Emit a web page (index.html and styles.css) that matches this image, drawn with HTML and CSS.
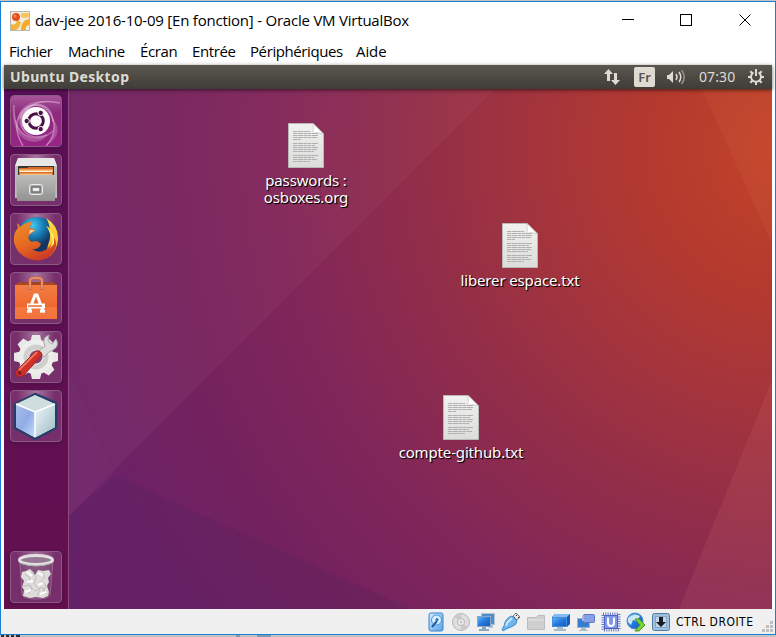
FILE: index.html
```html
<!DOCTYPE html>
<html lang="fr">
<head>
<meta charset="utf-8">
<title>dav-jee 2016-10-09 [En fonction] - Oracle VM VirtualBox</title>
<link rel="stylesheet" href="styles.css">
</head>
<body>
<svg class="defs" aria-hidden="true">
  <defs>
    <linearGradient id="paper" x2="0" y2="1"><stop stop-color="#f1f1f0"/><stop offset="1" stop-color="#dcdcdb"/></linearGradient>
    <linearGradient id="steel" x2="0" y2="1"><stop stop-color="#bdbdbb"/><stop offset="1" stop-color="#929290"/></linearGradient>
    <linearGradient id="orange" x2="0" y2="1"><stop stop-color="#f27d45"/><stop offset=".65" stop-color="#ee682d"/><stop offset=".66" stop-color="#f57842"/><stop offset="1" stop-color="#f27339"/></linearGradient>
    <radialGradient id="globe" cx=".4" cy=".2"><stop stop-color="#45c8ef"/><stop offset=".5" stop-color="#187fb9"/><stop offset="1" stop-color="#153461"/></radialGradient>
    <linearGradient id="fox" x1=".2" x2=".7" y2="1"><stop stop-color="#eb8b29"/><stop offset=".5" stop-color="#e66a20"/><stop offset="1" stop-color="#cb3626"/></linearGradient>
    <linearGradient id="flame" x2="0" y2="1"><stop stop-color="#ffdf45"/><stop offset=".6" stop-color="#fac229"/><stop offset="1" stop-color="#e96820"/></linearGradient>
    <linearGradient id="blue" x2="1" y2="1"><stop stop-color="#64b6f4"/><stop offset=".5" stop-color="#2679dd"/><stop offset="1" stop-color="#1557bc"/></linearGradient>
    <linearGradient id="pale" x2="1" y2="1"><stop stop-color="#d6edff"/><stop offset="1" stop-color="#57a2e5"/></linearGradient>
    <linearGradient id="cubeL" x2="1" y2="1"><stop stop-color="#a8bfe8"/><stop offset=".5" stop-color="#91ace6"/><stop offset="1" stop-color="#c4dcff"/></linearGradient>
    <linearGradient id="cubeR" x2="1" y2="1"><stop stop-color="#edf7fa"/><stop offset="1" stop-color="#9fbbc4"/></linearGradient>
    <linearGradient id="dashbg" x2="0" y2="1"><stop stop-color="#a8579b"/><stop offset=".35" stop-color="#8c2a7c"/><stop offset="1" stop-color="#982486"/></linearGradient>
    <symbol id="doc" viewBox="0 0 36 45">
      <path d="M.5.5H25L35.5 11V44.5H.5Z" fill="url(#paper)" stroke="#bcb7b7"/>
      <path d="M25 .5Q26 7 24.5 10.5Q29 8.500 35.500 11Z" fill="#fff" stroke="#c4c4c4" stroke-width=".7"/>
      <g stroke="#b0b0b0" stroke-dasharray="4 .5 6 .4 3 .5"><path d="M5 8.500H22M5 10.500H30M5 12.500H30M5 14.500H29M5 16.500H13M5 20.500H30M5 22.500H27M5 24.500H30M5 26.500H29M5 28.500H26M5 32.500H30M5 34.500H26M5 36.500H29M5 38.500H22"/></g>
    </symbol>
  </defs>
</svg>
<div class="window">
  <header class="titlebar">
    <svg class="app-icon" width="20" height="20" viewBox="0 0 20 20"><rect x=".5" y=".5" width="19" height="19" fill="#f1eee5" stroke="#bbb6ad"/><path d="M1 13Q6 15 7 9L11 11Q10 18 5 19H1Z" fill="#f3b43a"/><path d="M11 19Q11 9 19 8V14Q15 15 16 19Z" fill="#f7a927"/><path d="M11 2H19V6Q13 8 11 6Z" fill="#fbc55a"/><circle cx="6" cy="6" r="4" fill="#e84e1b"/><circle cx="5" cy="5" r="1.500" fill="#f58b62"/></svg>
    <span class="title">dav-jee 2016-10-09 [En fonction] - Oracle VM VirtualBox</span>
    <svg class="controls" width="130" height="14" viewBox="0 0 130 14" fill="none" stroke="#000" shape-rendering="crispEdges"><path d="M0 6.500H12M58.500 1.500H69.500V12.500H58.500Z"/><path shape-rendering="auto" d="M117.500 1.500L128.500 12.500M128.500 1.500L117.500 12.500"/></svg>
  </header>
  <nav class="menubar"><span class="m1">Fichier</span><span class="m2">Machine</span><span class="m3">Écran</span><span class="m4">Entrée</span><span class="m5">Périphériques</span><span class="m6">Aide</span></nav>
  <main class="screen">
    <div class="panel">
      <span class="panel-title">Ubuntu Desktop</span>
      <svg class="net" width="18" height="18" viewBox="0 0 18 18" fill="#dfdbd2"><path d="M5.500 1L10 6H7V13H4V6H1ZM12.500 17L8 12H11V5H14V12H17Z"/></svg>
      <span class="lang">Fr</span>
      <svg class="sound" width="20" height="18" viewBox="0 0 20 18"><path d="M1 7H3L7 3V15L3 11H1Z" fill="#dfdbd2"/><path d="M10 6Q12 9 10 12M13 4Q16.500 9 13 14" fill="none" stroke="#dfdbd2" stroke-width="1.500"/><path d="M15.500 2Q21 9 15.500 16" fill="none" stroke="#96938a" stroke-width="1.500"/></svg>
      <span class="clock">07:30</span>
      <svg class="power" width="18" height="18" viewBox="0 0 18 18" fill="none" stroke="#dfdbd2" stroke-width="2"><path d="M6.500 4.500A5 5 0 1 0 11.500 4.500M9 1V8M1 9H4M14 9H17M9 14V17M3.300 3.300L5.300 5.300M14.700 3.300L12.700 5.300M3.300 14.700L5.300 12.700M14.700 14.700L12.700 12.700"/></svg>
    </div>
    <div class="workspace">
      <aside class="launcher">
        <div class="tile dash"><svg viewBox="0 0 52 52"><path d="M0 0H52V52H0Z" fill="url(#dashbg)"/><g fill="none" stroke="#e3b6dc"><path d="M13 51Q3 34 9 21Q16 8 31 10Q42 13 43 27" opacity=".55" stroke-width="1.500"/><path d="M50 8Q29 3 17 14Q6 27 16 38Q25 45 37 40" opacity=".55" stroke-width="1.500"/><path d="M36 51Q47 39 43 24Q37 10 24 10Q13 13 10 24" opacity=".5" stroke-width="1.500"/><path d="M4 10Q3 32 15 40Q29 48 43 36" opacity=".45" stroke-width="1.500"/></g><path d="M50 8Q29 3 17 14Q6 27 16 38Q6 30 9 19Q17 1 50 8ZM36 51Q47 39 43 24Q55 39 36 51ZM4 10Q3 32 15 40Q25 47 37 41Q27 51 14 44Q0 34 4 10Z" fill="#fff" opacity=".2"/><circle cx="26" cy="26" r="14" fill="#fff"/><circle cx="26" cy="26" r="7.300" fill="none" stroke="#4c1144" stroke-width="3"/><g stroke="#fff" stroke-width="1"><circle cx="16.700" cy="26" r="2.700" fill="#4c1144"/><circle cx="30.700" cy="17.900" r="2.700" fill="#4c1144"/><circle cx="30.700" cy="34.100" r="2.700" fill="#4c1144"/></g></svg></div>
        <div class="tile"><svg viewBox="0 0 52 52"><path d="M5 12L8 4H44L47 12V44H5Z" fill="#bcbcbb"/><path d="M5 12L8 4H44L47 12Z" fill="#e7e7e5"/><path d="M8 12H44V23H8Z" fill="#353432"/><path d="M9 14H17L19 13H43V22H9Z" fill="#d76b29"/><path d="M9 16.500H43M10 20.500H42" stroke="#f8bf79" stroke-width="2"/><path d="M10 17.500H42" stroke="#fff3d9"/><path d="M6 21H46L45 47H7Z" fill="url(#steel)"/><rect x="19.500" y="30.500" width="13" height="10" rx="2" fill="#aaa" stroke="#ededec"/><path d="M22 33H30V38H22Z" fill="#eee" stroke="#706f6e" stroke-width="1.300"/></svg></div>
        <div class="tile"><svg viewBox="0 0 52 52"><circle cx="27" cy="25" r="21" fill="url(#globe)"/><path d="M36 5Q49 13 48 27Q46 45 29 47Q37 39 38 32Q43 21 36 13Q40 14 40 17Q39 9 36 5Z" fill="url(#flame)"/><path d="M7 10Q9 11 10 14Q14 10 20 9L22 8Q21 13 19 15Q24 15 25 18L19 22Q17 27 22 29Q27 26 31 31Q29 37 22 36Q30 42 38 35Q43 30 44 24Q49 33 42 41Q34 49 23 47Q7 43 4 29Q3 20 8 15Z" fill="url(#fox)"/><path d="M38 16Q46 27 39 36L44 31Q45 20 38 16Z" fill="#fff06b"/><path d="M20 17H25L19 21Z" fill="#fbd4a4"/></svg></div>
        <div class="tile"><svg viewBox="0 0 52 52"><path d="M5 13L9 10H43L47 13Z" fill="#a64525"/><path d="M5 13H47V47H5Z" fill="url(#orange)"/><path d="M20 18V9Q20 6 23 6H29Q32 6 32 9V18" fill="none" stroke="#bf6543" stroke-width="3"/><path d="M20 17V9Q20 6 23 6H29Q32 6 32 9V17" fill="none" stroke="#e98c68" stroke-width="2"/><path d="M19 39L25 23H27L33 39M17 39.300H22M30 39.300H35" fill="none" stroke="#fff" stroke-width="3"/><path d="M17 34H35" stroke="#fff" stroke-width="5"/><path d="M18 34H32" stroke="#eb6931" stroke-width="1.500"/></svg></div>
        <div class="tile"><svg viewBox="0 0 52 52"><g transform="translate(26 26)"><g fill="#e8e8e7"><path id="tooth" d="M-4-22H4L6-14H-6Z"/><use href="#tooth" transform="rotate(45)"/><use href="#tooth" transform="rotate(90)"/><use href="#tooth" transform="rotate(135)"/><use href="#tooth" transform="rotate(180)"/><use href="#tooth" transform="rotate(225)"/><use href="#tooth" transform="rotate(270)"/><use href="#tooth" transform="rotate(315)"/></g><circle r="12" fill="none" stroke="#ededec" stroke-width="11"/><circle r="10" fill="none" stroke="#cfcfce" stroke-width="5"/></g><path d="M29 20L35 15Q31 7 39 4L38 10L42 13L46 8Q50 15 43 19Q39 20 34 26Z" fill="#dedfdd" stroke="#a8a8a5"/><path d="M6 40L26 20Q31 19 32 24L13 45Q8 48 5.500 43Q5 41 6 40Z" fill="#cf302a" stroke="#922527"/><path d="M9 39L27 21" stroke="#f4755c" stroke-width="2"/><circle cx="9.500" cy="42" r="2" fill="#82201c"/></svg></div>
        <div class="tile"><svg viewBox="0 0 52 52"><path d="M5 14L25 4L46 13V38L25 49L5 38Z" fill="#cbdde6" stroke="#263e6b" stroke-width="2.500" stroke-linejoin="round"/><path d="M6 14L25 22V47L6 37Z" fill="url(#cubeL)"/><path d="M45 14L25 22V47L45 37Z" fill="url(#cubeR)"/><path d="M6 14L25 5L45 14L25 22Z" fill="#ceddde"/><path d="M6 14L25 22L45 14M25 22V47" fill="none" stroke="#fff" stroke-width="1.500"/></svg></div>
        <div class="tile trash"><svg viewBox="0 0 52 52"><path d="M10 10H43L40 44Q38 48 26 48Q14 48 12 44Z" fill="#80577c" opacity=".5" stroke="#b89cb5"/><path d="M12 21L16 20L20 18L23 21L25 24L28 19L33 20L39 19L41 23L38 27L39 31L37 35L39 41L38 45L33 47L26 46L20 47L13 45L14 39L12 36L14 30L11 26Z" fill="#dedddc"/><path d="M15 23L20 27L18 32L22 37L19 43M22 20L26 27L24 33L30 39L27 45M32 21L35 26L31 30L36 34L33 41M12 36L18 34L25 40L32 36L37 44" stroke="#c1bfbd" fill="none"/><path d="M17 21L22 25M28 22L33 24M17 31L23 30M28 34L33 32M15 41L21 39M30 43L36 41" stroke="#fff" stroke-width="2"/><ellipse cx="26" cy="9" rx="16.500" ry="4.500" fill="#967794" stroke="#e1e1df" stroke-width="3"/><path d="M10 12Q26 18 42 12" stroke="#a9aaa6" fill="none"/></svg></div>
      </aside>
      <section class="desktop">
        <svg class="facets" viewBox="69 89 703 520" preserveAspectRatio="none"><path d="M69 89H495L69 516Z" fill="#d99baa" opacity=".06"/><path d="M69 373L114 475L69 516Z" fill="#c07aa5" opacity=".03"/><path d="M114 475L411 609H69V516Z" fill="#4a2257" opacity=".18"/><path d="M702 89H772V244Z" fill="#ff9d65" opacity=".07"/><path d="M772 380V609H679Z" fill="#f19288" opacity=".1"/></svg>
        <figure class="file passwords"><svg><use href="#doc"/></svg><figcaption><span class="f1">passwords :</span><span class="f2">osboxes.org</span></figcaption></figure>
        <figure class="file espace"><svg><use href="#doc"/></svg><figcaption><span class="f3">liberer espace.txt</span></figcaption></figure>
        <figure class="file github"><svg><use href="#doc"/></svg><figcaption><span class="f4">compte-github.txt</span></figcaption></figure>
      </section>
    </div>
  </main>
  <footer class="statusbar">
    <svg viewBox="0 0 20 20"><rect x="3" y="1" width="14" height="18" rx="2" fill="url(#pale)" stroke="#3484ce"/><circle cx="10.500" cy="8" r="5" fill="#d8eeff" stroke="#4a95d9"/><circle cx="11" cy="7.500" r="1.500" fill="#2c74c2"/><path d="M11 9L6 15" stroke="#1d5cae" stroke-width="2"/></svg>
    <svg viewBox="0 0 20 20"><circle cx="10" cy="10" r="8.500" fill="#dedede" stroke="#b8b8b8"/><path d="M10 10L3 5Q6 1 10 2ZM10 10L17 15Q14 19 10 18Z" fill="#cacaca"/><circle cx="10" cy="10" r="3.500" fill="#eee" stroke="#b7b7b7"/><circle cx="10" cy="10" r="1" fill="#aaa"/></svg>
    <svg viewBox="0 0 20 20"><rect x="5.500" y="1.500" width="13" height="11" fill="#4f8dc9" stroke="#b0c1d2"/><path d="M14 13H17V16H12" fill="#aac4da"/><rect x="1.500" y="4.500" width="13" height="10" fill="url(#blue)" stroke="#8da9c3"/><path d="M6 15H10V17H13V19H3V17H6Z" fill="#8ba6bf"/></svg>
    <svg viewBox="0 0 20 20"><path d="M12 4L15 1L19 5L16 8Z" fill="#e8e8e8" stroke="#777"/><path d="M15 3L16 4M17 5L18 6" stroke="#333"/><path d="M11 4L16 9Q16 13 10 15L5 17L2 19L1 17L3 14Q4 6 11 4Z" fill="#6db7ee" stroke="#438dcc"/><path d="M11 6L6 11L5 14" stroke="#c4e6ff" stroke-width="2" fill="none"/></svg>
    <svg viewBox="0 0 20 20"><path d="M1.500 5.500H10L12 3.500H18.500V17.500H1.500Z" fill="#cfcfcf" stroke="#bcbcbc"/><path d="M2 8H18" stroke="#e6e6e6"/></svg>
    <svg viewBox="0 0 20 20"><path d="M1 5L4 2H19V12L16 15H1Z" fill="#195ab5"/><path d="M1 5L4 2H19L16 5Z" fill="#81bdf1"/><path d="M1.500 5.500H15.500V14.500H1.500Z" fill="url(#blue)" stroke="#448fdc"/><path d="M6 15H12V17H15V19H3V17H6Z" fill="#a6bbcf"/></svg>
    <svg viewBox="0 0 20 20"><rect x="1.500" y="6.500" width="12" height="9" fill="#347fd1" stroke="#9bb5cf"/><path d="M5 16H10V18H12V19H3V18H5Z" fill="#a6bbcf"/><rect x="7.500" y="2.500" width="11" height="8" rx="1" fill="#859fe8" stroke="#6475bd"/><path d="M6 4H8V9H6Z" fill="#a8b4d9"/></svg>
    <svg viewBox="0 0 20 20"><rect x="2" y="2" width="16" height="16" fill="none" stroke="#6878c2" stroke-width="3" stroke-dasharray="1 1.300"/><rect x="3.500" y="3.500" width="13" height="13" fill="#8097e8" stroke="#4c62c3"/><path d="M7 5.500V11Q7 14 10 14Q13 14 13 11V5.500" fill="none" stroke="#fff" stroke-width="2"/></svg>
    <svg viewBox="0 0 20 20"><circle cx="9" cy="9" r="8" fill="url(#blue)" stroke="#4a8ec7"/><path d="M2 6Q8 0 14 4L11 9L7 8L5 13L2 10Z" fill="#c9e8f3"/><path d="M9 7H13L19 13L13 19H9L14 13Z" fill="#7bd62c" stroke="#4d9725"/></svg>
    <svg viewBox="0 0 20 20"><rect x="1.500" y="1.500" width="17" height="17" rx="2" fill="#9fc1dd" stroke="#507ba5"/><rect x="4.500" y="4.500" width="11" height="11" fill="#c0d5e7" stroke="#81a5c8"/><path d="M8 5H12V10H15L10 15L5 10H8Z" fill="#1a1e23"/></svg>
    <span class="hostkey">CTRL DROITE</span>
    <svg class="grip" viewBox="0 0 11 11" fill="#bfbfbf"><path d="M8 0H11V3H8ZM4 4H7V7H4ZM8 4H11V7H8ZM0 8H3V11H0ZM4 8H7V11H4ZM8 8H11V11H8Z"/></svg>
  </footer>
</div>
<div class="behind"><svg width="280" height="2"><path d="M1 1H4M6 1H9M11 1H14M16 1H20" stroke="#302d35" stroke-width="2"/><path d="M236 1H240M257 1H271" stroke="#7c9bb0" stroke-width="2"/></svg></div>
</body>
</html>
```

FILE: styles.css
```css
* { box-sizing: border-box; }
body { margin: 0; width: 776px; height: 637px; overflow: hidden; background: #c5c2bf; padding-top: 1px; font-family: "Open Sans", "Noto Sans", sans-serif; }
.defs { position: absolute; width: 0; height: 0; }
svg { display: block; flex: none; }
span { white-space: nowrap; }
.window { height: 634px; border: 1px solid #1a80d3; background: #fff; padding: 0 3px; display: flex; flex-direction: column; }
.titlebar { height: 38px; display: flex; align-items: center; padding-left: 6px; color: #000; }
.title { width: 450px; margin-left: 5px; padding-bottom: 2px; font-size: 15px; letter-spacing: -.22px; }
.controls { margin: -2px 0 0 137px; }
.menubar { height: 25px; display: flex; align-items: center; padding: 0 0 2px 5px; font-size: 15px; line-height: 23px; letter-spacing: -.4px; }
.m1 { width: 59px; } .m2 { width: 72px; } .m3 { width: 52px; } .m4 { width: 58px; } .m5 { width: 106px; } .m6 { letter-spacing: -.1px; }
.screen { height: 544px; width: 768px; }
.panel { height: 24px; display: flex; align-items: center; color: #dfdbd2; background: linear-gradient(#5a574f, #3f3d38); font-family: "Noto Sans", sans-serif; position: relative; z-index: 1; box-shadow: 0 1px 4px #0009; }
.panel-title { width: 592px; padding: 0 0 2px 6px; font-weight: 700; font-size: 14px; letter-spacing: .35px; }
.net { margin-left: 7px; }
.lang { width: 21px; height: 20px; margin-left: 13px; border-radius: 2px; background: #dfdbd2; color: #56534c; text-align: center; font-size: 13px; font-weight: 600; line-height: 20px; }
.sound { margin-left: 11px; }
.clock { width: 37px; margin-left: 13px; padding-bottom: 2px; font-size: 14px; letter-spacing: .1px; }
.power { margin-left: 11px; }
.workspace { height: 520px; display: flex; background: radial-gradient(circle at 790px 60px, #c4452a 0, #b53a2e 140px, #a5353c 250px, #932e48 370px, #80265a 520px, #73225e 650px, #6b226a 780px); }
.launcher { width: 65px; border-right: 1px solid #8c4c7d; padding: 6px; display: flex; flex-direction: column; gap: 7px; background: linear-gradient(#5c1059, #64104f); }
.tile { width: 52px; height: 52px; flex: none; overflow: hidden; border: 1px solid #8b5a85; border-radius: 4px; background: radial-gradient(ellipse at 50% 0, #a6759f, #782e6b 55%, #75306b); box-shadow: 0 1px 4px #2b052b66; }
.tile svg { width: 52px; height: 52px; margin: -1px; }
.tile.trash { margin-top: auto; }
.desktop { width: 703px; position: relative; }
.facets { width: 703px; height: 520px; }
.file { position: absolute; margin: 0; width: 140px; display: flex; flex-direction: column; align-items: center; }
.file > svg { width: 36px; height: 45px; }
.passwords { left: 167px; top: 34px; }
.espace { left: 381px; top: 134px; }
.github { left: 322px; top: 306px; }
figcaption { margin-top: 4px; text-align: center; color: #fff; font: 15px/17px "Noto Sans", sans-serif; text-shadow: 1px 1px 1px #000, 1px 1px 0 #0008; }
figcaption span { display: block; letter-spacing: -.15px; }
.statusbar { height: 25px; margin: 0 -3px; padding-left: 425px; background: #f0f0f0; display: flex; align-items: center; gap: 5px; }
.statusbar > svg { width: 20px; height: 20px; }
.hostkey { width: 81px; margin-left: 0; font: 12px "DejaVu Sans Condensed", "DejaVu Sans", sans-serif; letter-spacing: .5px; }
.statusbar > .grip { width: 11px; height: 11px; margin: 10px 0 0; }
.behind { height: 2px; }
```
